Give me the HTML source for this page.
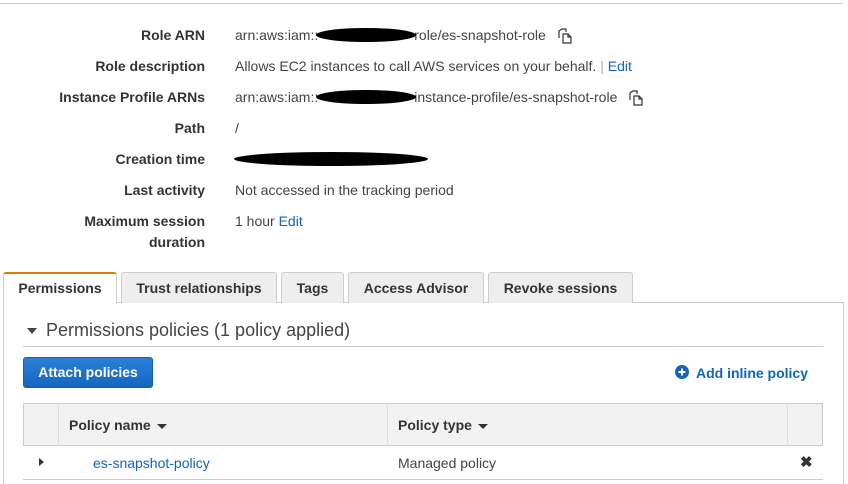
<!DOCTYPE html>
<html><head><meta charset="utf-8"><style>
*{box-sizing:border-box;margin:0;padding:0}
html,body{width:848px;height:484px;overflow:hidden}
body{background:#fff;font-family:"Liberation Sans",Arial,sans-serif;font-size:14px;color:#444;position:relative}
.a{position:absolute;white-space:nowrap}
.l{font-weight:bold;right:643px;text-align:right;color:#333}
.v{left:235px}
.blob{position:absolute;background:#000;border-radius:50%}
.link{color:#1166bb}
.tab{position:absolute;top:272px;height:31px;border:1px solid #ccc;border-bottom:none;background:#eee;font-weight:bold;color:#333;text-align:center;line-height:30px;border-radius:3px 3px 0 0}
.sort{display:inline-block;width:0;height:0;border-left:5px solid transparent;border-right:5px solid transparent;border-top:5px solid #333;vertical-align:middle;margin-left:6px}
</style></head><body>
<div class="a" style="left:0;top:3px;width:843px;height:1px;background:#ccc"></div>

<div class="a l" style="top:27px">Role ARN</div>
<div class="a v" style="top:27px">arn:aws:iam::<span style="display:inline-block;width:96px"></span>role/es-snapshot-role</div>
<div class="blob" style="left:316px;top:28px;width:100px;height:14px"></div>
<svg class="a" style="left:557px;top:28px" width="16" height="16" viewBox="0 0 16 16" fill="none" stroke="#333" stroke-width="1.2"><path d="M2 10V3l3-2h4v3"/><path d="M6 6h5l3 3v6H6z"/><path d="M11 6v3h3"/></svg>

<div class="a l" style="top:58px">Role description</div>
<div class="a v" style="top:58px">Allows EC2 instances to call AWS services on your behalf. <span style="color:#aaa">|</span> <span class="link">Edit</span></div>

<div class="a l" style="top:89px">Instance Profile ARNs</div>
<div class="a v" style="top:89px">arn:aws:iam::<span style="display:inline-block;width:96px"></span>instance-profile/es-snapshot-role</div>
<div class="blob" style="left:316px;top:90px;width:100px;height:14px"></div>
<svg class="a" style="left:628px;top:90px" width="16" height="16" viewBox="0 0 16 16" fill="none" stroke="#333" stroke-width="1.2"><path d="M2 10V3l3-2h4v3"/><path d="M6 6h5l3 3v6H6z"/><path d="M11 6v3h3"/></svg>

<div class="a l" style="top:120px">Path</div>
<div class="a v" style="top:120px">/</div>

<div class="a l" style="top:151px">Creation time</div>
<div class="blob" style="left:234px;top:152px;width:194px;height:14px"></div>

<div class="a l" style="top:182px">Last activity</div>
<div class="a v" style="top:182px">Not accessed in the tracking period</div>

<div class="a l" style="top:211px;line-height:21px">Maximum session<br>duration</div>
<div class="a v" style="top:213px">1 hour <span class="link">Edit</span></div>

<div class="a" style="left:3px;top:302px;width:841px;height:190px;border:1px solid #ccc"></div>
<div class="tab" style="left:3px;width:114px;background:#fff;border-top:2px solid #e07b00;height:32px;line-height:29px">Permissions</div>
<div class="tab" style="left:121px;width:156px">Trust relationships</div>
<div class="tab" style="left:281px;width:63px">Tags</div>
<div class="tab" style="left:348px;width:136px">Access Advisor</div>
<div class="tab" style="left:488px;width:145px">Revoke sessions</div>

<div class="a" style="left:27px;top:328px;width:0;height:0;border-left:5px solid transparent;border-right:5px solid transparent;border-top:6px solid #444"></div>
<div class="a" style="left:46px;top:320px;font-size:18px;color:#444">Permissions policies (1 policy applied)</div>
<div class="a" style="left:23px;top:346px;width:800px;height:1px;background:#ccc"></div>

<div class="a" style="left:23px;top:357px;width:130px;height:31px;background:linear-gradient(#2a7fd6,#1666c0);border:1px solid #155fae;border-radius:3px;color:#fff;font-weight:bold;text-align:center;line-height:29px">Attach policies</div>
<svg class="a" style="left:675px;top:365px" width="14" height="14" viewBox="0 0 14 14"><circle cx="7" cy="7" r="7" fill="#1166bb"/><path d="M7 3.5v7M3.5 7h7" stroke="#fff" stroke-width="2"/></svg>
<div class="a link" style="left:696px;top:365px;font-weight:bold">Add inline policy</div>

<div class="a" style="left:23px;top:403px;width:800px;height:43px;background:#f2f2f2;border:1px solid #ccc"></div>
<div class="a" style="left:58px;top:403px;width:1px;height:43px;background:#ddd"></div>
<div class="a" style="left:387px;top:403px;width:1px;height:43px;background:#ddd"></div>
<div class="a" style="left:787px;top:403px;width:1px;height:43px;background:#ddd"></div>
<div class="a" style="left:69px;top:417px;font-weight:bold;color:#333">Policy name<span class="sort"></span></div>
<div class="a" style="left:398px;top:417px;font-weight:bold;color:#333">Policy type<span class="sort"></span></div>
<div class="a" style="left:39px;top:458px;width:0;height:0;border-top:4px solid transparent;border-bottom:4px solid transparent;border-left:5px solid #333"></div>
<div class="a link" style="left:93px;top:455px">es-snapshot-policy</div>
<div class="a" style="left:398px;top:455px">Managed policy</div>
<div class="a" style="left:800px;top:453px;font-weight:bold;color:#333;font-size:15px">✖</div>
<div class="a" style="left:23px;top:479px;width:800px;height:1px;background:#ccc"></div>
</body></html>
